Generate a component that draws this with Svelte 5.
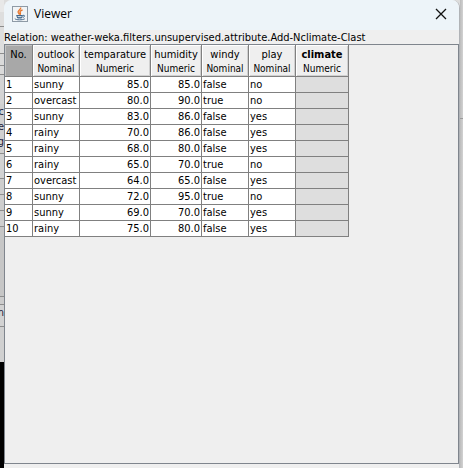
<script>
  const columns = [
    { name: 'No.', type: '', width: 28 },
    { name: 'outlook', type: 'Nominal', width: 47 },
    { name: 'temparature', type: 'Numeric', width: 71 },
    { name: 'humidity', type: 'Numeric', width: 51 },
    { name: 'windy', type: 'Nominal', width: 47 },
    { name: 'play', type: 'Nominal', width: 47 },
    { name: 'climate', type: 'Numeric', width: 53 }
  ];
  const rows = [
    ['sunny', '85.0', '85.0', 'false', 'no'],
    ['overcast', '80.0', '90.0', 'true', 'no'],
    ['sunny', '83.0', '86.0', 'false', 'yes'],
    ['rainy', '70.0', '86.0', 'false', 'yes'],
    ['rainy', '68.0', '80.0', 'false', 'yes'],
    ['rainy', '65.0', '70.0', 'true', 'no'],
    ['overcast', '64.0', '65.0', 'false', 'yes'],
    ['sunny', '72.0', '95.0', 'true', 'no'],
    ['sunny', '69.0', '70.0', 'false', 'yes'],
    ['rainy', '75.0', '80.0', 'false', 'yes']
  ];
  // Slices of the window behind the dialog
  const behind = [
    { h: 12, bg: '#e8e8e8' },
    { h: 15, bg: '#dedede', line: true },
    { h: 27, bg: '#dedede', line: true },
    { h: 12, bg: '#dadada', line: true },
    { h: 9, bg: '#dadada', line: true },
    { h: 29, bg: '#d4d4d4' },
    { h: 15, bg: '#d0d0d0', text: 'ec' },
    { h: 15, bg: '#d0d0d0', text: 'ne' },
    { h: 20, bg: '#d0d0d0', text: 'ug', line: true },
    { h: 25, bg: '#d2d2d2', line: true },
    { h: 16, bg: '#cecece', line: true },
    { h: 16, bg: '#cecece', line: true },
    { h: 16, bg: '#cecece', line: true },
    { h: 70, bg: '#c6c6c6', line: true },
    { h: 8, bg: '#cccccc', line: true },
    { h: 22, bg: '#d2d2d2', line: true, text: 'in' },
    { h: 35, bg: '#d0d0d0' }
  ];
</script>

<div class="desktop">
  <div class="left" aria-hidden="true">
    {#each behind as b}
      <div class="slice" class:line={b.line} style="height:{b.h}px;background-color:{b.bg}">{b.text ?? ''}</div>
    {/each}
    <div class="console"></div>
  </div>
  <main class="dialog">
    <header>
      <svg class="logo" width="16" height="16" viewBox="0 0 16 16" aria-hidden="true">
        <rect x=".5" y=".5" width="15" height="15" fill="#f1f4f6" stroke="#8e9aa6" />
        <path d="M8.6 1.5C9.6 3.6 5.2 4.4 6.2 6.3L7.6 8.6M10.6 3.8C8 4.8 7.4 5.8 8.4 7L8.2 8.8" fill="none" stroke="#e8762c" stroke-width="1.4" />
        <path d="M4.4 9.5H10.6M5 11.3H10M4.8 9.5L5.6 12H9.6L10.4 9.5M10.8 9.4C13.4 8.8 12.8 11 10.8 11.5M2.8 12.6C4 14.2 10.6 14.2 12.8 12.8" fill="none" stroke="#44698c" />
      </svg>
      <h1>Viewer</h1>
      <button aria-label="Close">
        <svg width="12" height="12" viewBox="0 0 12 12"><path d="M1 1L11 11M11 1L1 11" stroke="#111" stroke-width="1.3" /></svg>
      </button>
    </header>
    <p class="relation">Relation: weather-weka.filters.unsupervised.attribute.Add-Nclimate-Clast</p>
    <div class="pane">
      <table>
        <colgroup>
          {#each columns as c}<col style="width:{c.width}px" />{/each}
        </colgroup>
        <thead>
          <tr>
            {#each columns as c, i}
              <th class:index={i === 0} class:target={i === 6} scope="col">
                <span class="name">{c.name}</span>
                <span class="type">{c.type}</span>
              </th>
            {/each}
          </tr>
        </thead>
        <tbody>
          {#each rows as r, i}
            <tr>
              <td>{i + 1}</td>
              {#each r as v, j}<td class:num={j === 1 || j === 2}>{v}</td>{/each}
              <td class="missing"></td>
            </tr>
          {/each}
        </tbody>
      </table>
    </div>
    <footer></footer>
  </main>
  <div class="right" aria-hidden="true"></div>
</div>

<style>
  :global(body) { margin: 0; background: #dcdcdc; }
  .desktop {
    display: grid;
    grid-template-columns: 4px minmax(0, 1fr) 3px;
    height: 100vh;
    overflow: hidden;
    font: 11px/14px "DejaVu Sans Condensed", "DejaVu Sans", sans-serif;
    color: #000;
  }
  .left { display: flex; flex-direction: column; overflow: hidden; }
  .slice {
    flex: none;
    box-sizing: border-box;
    display: flex;
    justify-content: flex-end;
    line-height: 16px;
    color: #1c1c3c;
  }
  .line { border-bottom: 1px solid #8d8d8d; }
  .console { flex: 1; background: #000; }
  .right {
    background: linear-gradient(#9b9b9b, #9b9b9b) 0 118px / 100% 1px no-repeat, linear-gradient(90deg, #bcbcbc, #d2d2d2);
  }
  .dialog {
    display: flex;
    flex-direction: column;
    background: #efefef;
    border-radius: 8px 8px 0 0;
    border-right: 1px solid #b0b3b7;
    overflow: hidden;
  }
  header {
    display: flex;
    align-items: center;
    gap: 6px;
    height: 30px;
    padding: 0 12px 2px 8px;
    box-sizing: border-box;
    background: #edf4f9;
  }
  h1 { flex: 1; margin: 0; font: 12px/16px "Open Sans", "Noto Sans", sans-serif; }
  button { display: flex; padding: 0; border: 0; background: none; }
  .relation { margin: 0; height: 14px; line-height: 16px; white-space: nowrap; }
  .pane { flex: 1; border: 1px solid #7f858d; }
  footer { height: 4px; }
  table { table-layout: fixed; width: 344px; border-collapse: separate; border-spacing: 0; }
  th, td { box-sizing: border-box; padding: 0; border-right: 1px solid #808080; border-bottom: 1px solid #808080; }
  th {
    height: 32px;
    vertical-align: top;
    background: #efefef;
    font-weight: normal;
    text-align: center;
    white-space: nowrap;
    box-shadow: inset 1px 1px #fff, inset -1px -1px #d0d0d0;
  }
  .index { background: #a8a8a8; box-shadow: inset 1px 1px #c4c4c4; }
  .name, .type { display: block; }
  .name { padding-top: 3px; }
  .type { font-size: 10px; line-height: 14px; }
  .target .name { font-weight: bold; }
  td { height: 16px; padding-left: 1px; line-height: 15px; background: #fff; white-space: nowrap; }
  .num { text-align: right; padding: 0 1px 0 0; }
  .missing { background: #dedede; }
</style>
